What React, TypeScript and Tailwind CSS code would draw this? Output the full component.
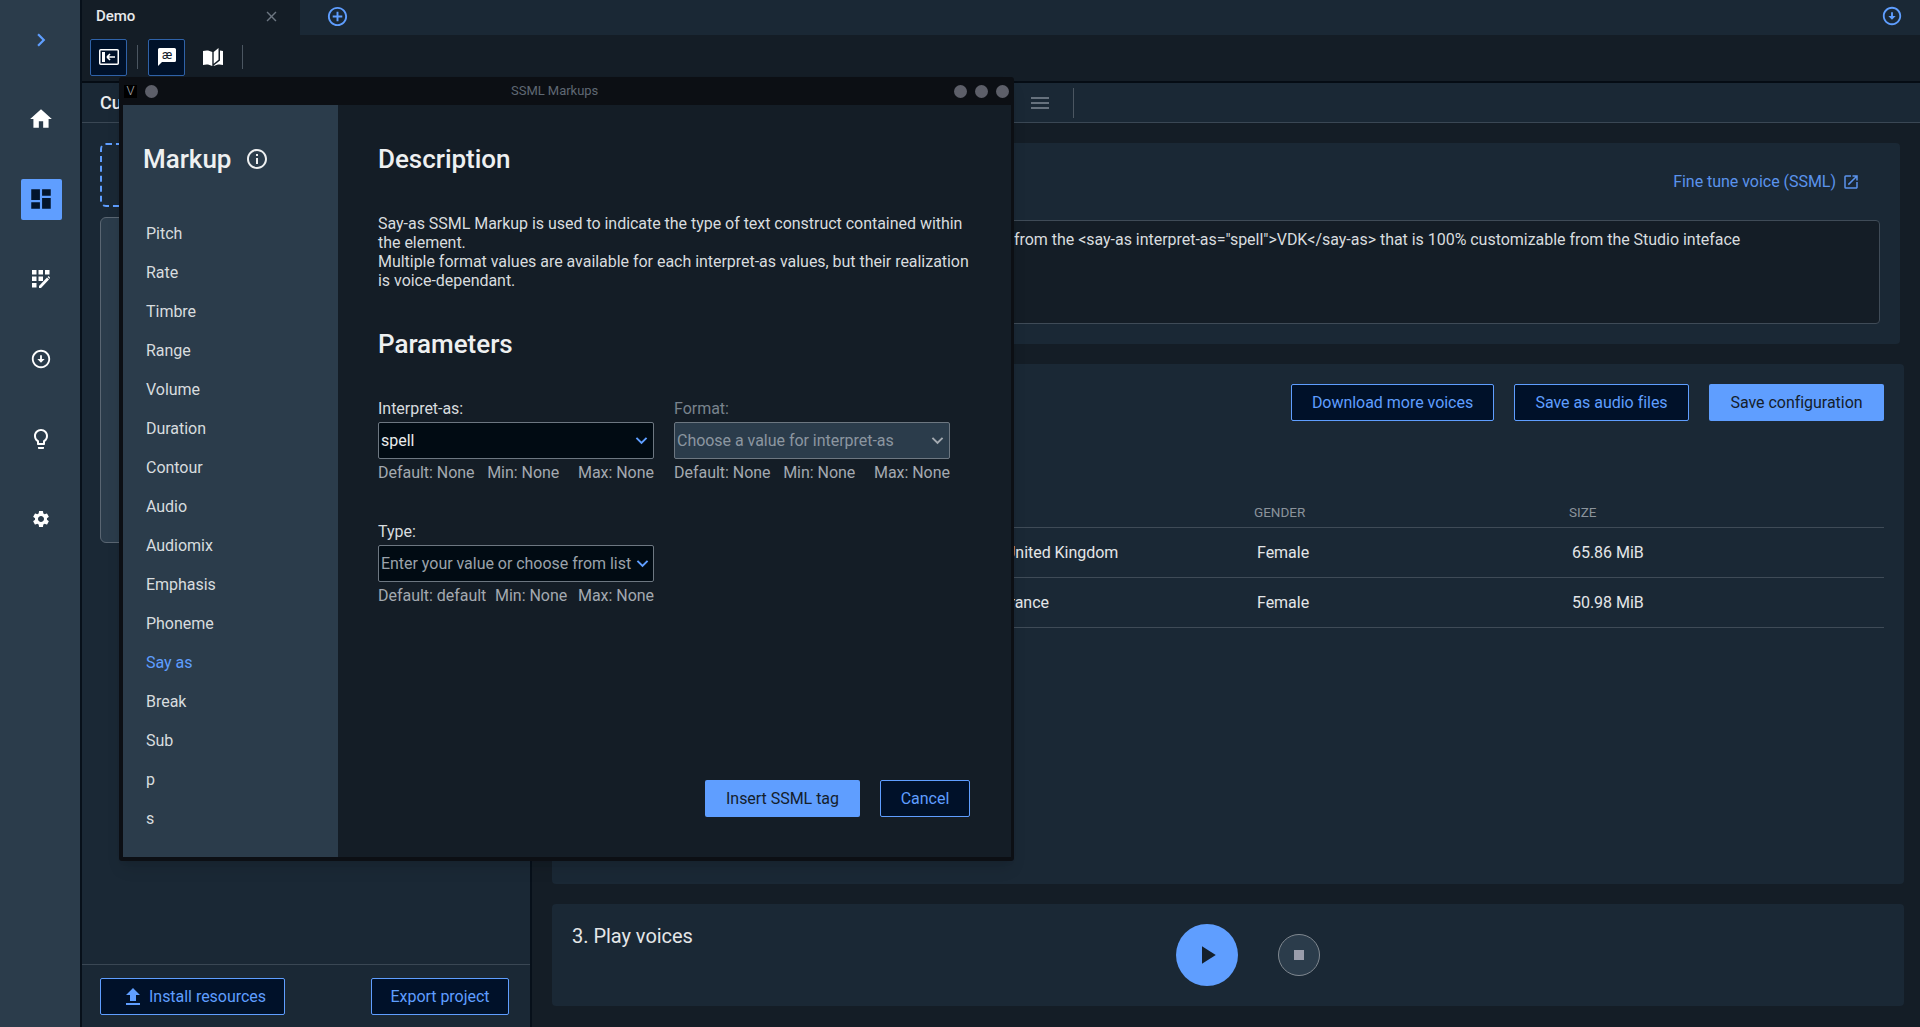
import React from "react";
import {
  MdHome, MdDashboard, MdOutlineArrowCircleDown, MdLightbulbOutline, MdSettings, MdClose,
  MdAddCircleOutline, MdInfoOutline, MdOpenInNew, MdFileUpload, MdMenu, MdPlayArrow,
  MdKeyboardArrowDown, MdChevronRight,
} from "react-icons/md";

const Outline = ({ className = "", children }: { className?: string; children: React.ReactNode }) => (
  <div className={"flex items-center justify-center h-[37px] bg-[#001129] border border-[#5f9eff] rounded-[2px] text-[#5f9eff] text-[16px] " + className}>
    {children}
  </div>
);

const Solid = ({ className = "", children }: { className?: string; children: React.ReactNode }) => (
  <div className={"flex items-center justify-center h-[37px] bg-[#5f9eff] rounded-[2px] text-[#14202c] text-[16px] " + className}>
    {children}
  </div>
);

const EditGrid = () => (
  <svg width="18" height="18" viewBox="0 0 18 18" fill="#fff">
    <rect x="0" y="0" width="4.5" height="4.5" />
    <rect x="6.5" y="0" width="4.5" height="4.5" />
    <rect x="13" y="0" width="4.5" height="4.5" />
    <rect x="0" y="6.5" width="4.5" height="4.5" />
    <rect x="6.5" y="6.5" width="4.5" height="4.5" />
    <rect x="0" y="13" width="4.5" height="4.5" />
    <path d="M7 16 L15 7.6 L17 9.6 L9 18 L7 18 Z M15.6 7 L16.6 6 L18 7.4 L17.6 9 Z" />
  </svg>
);

const PanelArrow = () => (
  <svg width="20" height="16" viewBox="0 0 20 16" fill="none">
    <rect x="0.75" y="0.75" width="18.5" height="14.5" rx="1" stroke="#fff" strokeWidth="1.5" />
    <rect x="3" y="3" width="3" height="10" fill="#fff" />
    <path d="M8 8 H16 M8 8 L11 5 M8 8 L11 11" stroke="#fff" strokeWidth="1.6" />
  </svg>
);

const Bubble = () => (
  <svg width="18" height="18" viewBox="0 0 18 18">
    <path d="M1.5 0 H16.5 A1.5 1.5 0 0 1 18 1.5 V12.5 A1.5 1.5 0 0 1 16.5 14 H4 L0 18 V1.5 A1.5 1.5 0 0 1 1.5 0 Z" fill="#fff" />
    <text x="9" y="10.5" textAnchor="middle" fontSize="12" fontFamily="Roboto, sans-serif" fill="#14202c">æ</text>
  </svg>
);

const Book = () => (
  <svg width="20" height="18" viewBox="0 0 20 18" fill="#fff">
    <path d="M0 3 C3 2 6.5 2.2 9.3 4 V18 C6.5 16.3 3 16 0 17 Z" />
    <path d="M10.7 4 L15.5 0 V11.8 L10.7 15.8 Z" />
    <path d="M17 2.6 C18 2.7 19 2.8 20 3 V17 C17 16 13.5 16.3 10.7 18 V17.4 L17 12.6 Z" />
  </svg>
);

const Chevron = ({ className = "" }: { className?: string }) => (
  <MdKeyboardArrowDown className={"shrink-0 -mr-[2px] " + className} size={23} />
);

const menu = ["Pitch", "Rate", "Timbre", "Range", "Volume", "Duration", "Contour", "Audio", "Audiomix", "Emphasis", "Phoneme", "Say as", "Break", "Sub", "p", "s"];

const Hints = ({ a, minClass }: { a: string; minClass: string }) => (
  <div className="flex justify-between mt-[4px] h-[19px] leading-[19px] text-[16px] text-[#a3a9b0] whitespace-nowrap">
    <span>{a}</span>
    <span className={minClass}>Min: None</span>
    <span>Max: None</span>
  </div>
);

export default function App() {
  return (
    <div className="relative flex w-[1920px] h-[1027px] overflow-hidden bg-[#141d26] font-['Roboto',sans-serif] tracking-[-0.03px] text-[#d8dcdf]">
      {/* Application navigation */}
      <nav className="flex flex-col items-center w-[82px] pl-[2px] shrink-0 bg-[#2b3c4b] border-r-2 border-[#07101a]">
        <div className="flex items-center justify-center h-[79px] text-[#5f9eff]">
          <MdChevronRight size={26} />
        </div>
        <div className="flex items-center justify-center h-[80px] text-white"><MdHome size={26} /></div>
        <div className="flex items-center justify-center h-[80px]">
          <div className="flex items-center justify-center w-[41px] h-[41px] bg-[#5f9eff] rounded-[2px] text-[#03142b]">
            <MdDashboard size={26} />
          </div>
        </div>
        <div className="flex items-center justify-center h-[80px]"><EditGrid /></div>
        <div className="flex items-center justify-center h-[80px] text-white"><MdOutlineArrowCircleDown size={22} /></div>
        <div className="flex items-center justify-center h-[80px] text-white"><MdLightbulbOutline size={24} /></div>
        <div className="flex items-center justify-center h-[80px] text-white"><MdSettings size={20} /></div>
      </nav>

      <div className="flex flex-col flex-1 min-w-0">
        {/* Tab strip */}
        <div className="flex items-center h-[35px] pb-[3px] bg-[#1a2835] shrink-0">
          <div className="flex items-center justify-between w-[218px] h-[35px] -mb-[3px] pb-[3px] pl-[14px] pr-[20px] bg-[#141d26]">
            <span className="text-[15px] font-medium text-[#e8eaec]">Demo</span>
            <MdClose size={17} className="text-[#6c7681]" />
          </div>
          <MdAddCircleOutline size={23} className="ml-[26px] text-[#5f9eff]" />
          <MdOutlineArrowCircleDown size={22} className="ml-auto mr-[17px] text-[#5f9eff]" />
        </div>

        {/* Toolbar */}
        <div className="flex items-center h-[48px] pb-[2px] pl-[8px] bg-[#141d26] border-b-2 border-[#050c14] shrink-0">
          <div className="flex items-center justify-center w-[37px] h-[37px] bg-[#001129] border border-[#2f62a8] rounded-[2px]">
            <PanelArrow />
          </div>
          <div className="w-px h-[24px] ml-[10px] mr-[10px] bg-[#4b5661]" />
          <div className="flex items-center justify-center w-[37px] h-[37px] bg-[#001129] border border-[#2f62a8] rounded-[2px]">
            <Bubble />
          </div>
          <div className="flex items-center justify-center w-[20px] ml-[18px]"><Book /></div>
          <div className="w-px h-[24px] ml-[19px] bg-[#4b5661]" />
        </div>

        <div className="flex flex-1 min-h-0">
          {/* Project panel */}
          <aside className="flex flex-col w-[450px] shrink-0 bg-[#1a2835] border-r-2 border-[#07101a]">
            <div className="flex items-center h-[40px] pl-[18px] border-b border-[#3a4754] text-[18px] font-medium text-[#eceef0] shrink-0">
              Custom voices
            </div>
            <div className="flex flex-col flex-1 pl-[18px] pr-[22px] pt-[20px]">
              <div className="h-[64px] border-2 border-dashed border-[#5f9eff] rounded-[6px]" />
              <div className="h-[326px] mt-[10px] bg-[#2b3c4b] border border-[#5a6672] rounded-[6px]" />
            </div>
            <div className="flex items-start justify-between h-[63px] pt-[13px] pl-[18px] pr-[21px] border-t border-[#3a4754] shrink-0">
              <Outline className="w-[185px] gap-[4px] pl-[2px]">
                <MdFileUpload size={24} />
                <span>Install resources</span>
              </Outline>
              <Outline className="w-[138px]">Export project</Outline>
            </div>
          </aside>

          {/* Workspace */}
          <main className="flex flex-col flex-1 min-w-0 bg-[#141d26]">
            <div className="flex items-center h-[40px] pl-[496px] bg-[#1a2835] border-b border-[#3a4754] shrink-0">
              <MdMenu size={24} className="text-[#66717d]" />
              <div className="w-px h-[30px] ml-[21px] bg-[#4b5661]" />
            </div>
            <div className="flex flex-col gap-[20px] pt-[20px] pl-[20px] pr-[16px]">
              <section className="flex flex-col h-[201px] mr-[4px] bg-[#1a2835] rounded-[4px] pr-[20px] pl-[16px]">
                <div className="flex items-center justify-end gap-[6px] h-[77px] pr-[20px] text-[16px] text-[#5b93ec]">
                  <span>Fine tune voice (SSML)</span>
                  <MdOpenInNew size={18} />
                </div>
                <div className="h-[104px] pl-[445px] pt-[9px] bg-[#141d26] border border-[#3f4b57] rounded-[4px] text-[16px] leading-[19px] text-[#d8dcdf] whitespace-nowrap">
                  {'from the <say-as interpret-as="spell">VDK</say-as> that is 100% customizable from the Studio inteface'}
                </div>
              </section>

              <section className="flex flex-col h-[520px] bg-[#1a2835] rounded-[4px] pt-[20px] pl-[16px] pr-[20px]">
                <div className="flex justify-end gap-[20px]">
                  <Outline className="w-[203px]">Download more voices</Outline>
                  <Outline className="w-[175px]">Save as audio files</Outline>
                  <Solid className="w-[175px]">Save configuration</Solid>
                </div>
                <div className="grid grid-cols-[435px_251px_315px_1fr] items-center h-[27px] mt-[80px] pb-[4px] border-b border-[#3f4b57] text-[13.5px] text-[#8b939b]">
                  <span />
                  <span />
                  <span>GENDER</span>
                  <span>SIZE</span>
                </div>
                {[
                  { loc: "United Kingdom", size: "65.86 MiB", cls: "pl-[2px]" },
                  { loc: "France", size: "50.98 MiB", cls: "-ml-[2px]" },
                ].map(({ loc, size, cls }) => (
                  <div key={loc} className="grid grid-cols-[435px_251px_315px_1fr] items-center h-[50px] border-b border-[#3f4b57] text-[16px] text-[#e4e6e8]">
                    <span />
                    <span className={cls}>{loc}</span>
                    <span className="pl-[3px]">Female</span>
                    <span className="pl-[3px]">{size}</span>
                  </div>
                ))}
              </section>

              <section className="flex items-center h-[102px] bg-[#1a2835] rounded-[4px] pl-[20px]">
                <div className="self-start w-[604px] mt-[18px] text-[20px] leading-[28px] text-[#e4e6e8]">3. Play voices</div>
                <div className="flex items-center justify-center w-[62px] h-[62px] rounded-full bg-[#5f9eff] text-[#14202c]">
                  <MdPlayArrow size={30} />
                </div>
                <div className="flex items-center justify-center w-[42px] h-[42px] ml-[40px] rounded-full bg-[#2b3c4b] border border-[#808890]">
                  <div className="w-[10px] h-[10px] bg-[#9a9dab]" />
                </div>
              </section>
            </div>
          </main>
        </div>
      </div>

      {/* SSML Markups window */}
      <div className="absolute left-[119px] top-[77px] flex flex-col w-[895px] h-[784px] pl-[4px] pr-[3px] pb-[4px] bg-[#0c0f14] rounded-[3px] shadow-lg">
        <div className="flex items-center h-[28px] pl-px pr-[2px] shrink-0">
          <div className="flex items-center justify-center w-[13px] h-[13px] bg-black text-[13px] font-light text-[#a9adb2]">V</div>
          <div className="w-[13px] h-[13px] ml-[8px] rounded-full bg-[#5d5f69]" />
          <div className="ml-[353px] text-[13px] text-[#5f6873]">SSML Markups</div>
          <div className="flex gap-[8px] ml-auto">
            <div className="w-[13px] h-[13px] rounded-full bg-[#5d5f69]" />
            <div className="w-[13px] h-[13px] rounded-full bg-[#5d5f69]" />
            <div className="w-[13px] h-[13px] rounded-full bg-[#5d5f69]" />
          </div>
        </div>
        <div className="flex flex-1 min-h-0">
          <div className="flex flex-col w-[215px] shrink-0 bg-[#2b3c4b]">
            <div className="flex items-center gap-[14px] h-[54px] ml-[20px] mt-[27px]">
              <span className="text-[26px] font-medium text-[#eef0f1]">Markup</span>
              <MdInfoOutline size={24} className="text-[#eef0f1]" />
            </div>
            <div className="flex flex-col mt-[28px] pl-[23px]">
              {menu.map((m) => (
                <div key={m} className={"flex items-center h-[39px] text-[16px] " + (m === "Say as" ? "text-[#5f9eff]" : "text-[#d8dcdf]")}>
                  {m}
                </div>
              ))}
            </div>
          </div>
          <div className="relative flex flex-col flex-1 min-w-0 bg-[#141d26] pl-[40px] pr-[32px]">
            <div className="flex items-center h-[54px] mt-[27px] text-[26px] font-medium text-[#eef0f1]">Description</div>
            <p className="mt-[28px] text-[16px] leading-[19px] text-[#d8dcdf]">
              Say-as SSML Markup is used to indicate the type of text construct contained within the element.<br />
              Multiple format values are available for each interpret-as values, but their realization is voice-dependant.
            </p>
            <div className="flex items-center h-[54px] mt-[27px] text-[26px] font-medium text-[#eef0f1]">Parameters</div>
            <div className="grid grid-cols-[276px_276px] gap-x-[20px] mt-[28px]">
              <div>
                <div className="h-[19px] leading-[19px] text-[16px] text-[#d8dcdf]">Interpret-as:</div>
                <div className="flex items-center justify-between h-[37px] mt-[4px] pl-[2px] pr-[2px] bg-[#010b13] border border-[#6d7781] rounded-[2px] text-[16px] text-[#e8eaec]">
                  <span>spell</span>
                  <Chevron className="text-[#5f9eff]" />
                </div>
                <Hints a="Default: None" minClass="mr-[6px]" />
              </div>
              <div>
                <div className="h-[19px] leading-[19px] text-[16px] text-[#79838d]">Format:</div>
                <div className="flex items-center justify-between h-[37px] mt-[4px] pl-[2px] pr-[2px] bg-[#2b3c4b] border border-[#6d7781] rounded-[2px] text-[16px] text-[#8c96a0]">
                  <span>Choose a value for interpret-as</span>
                  <Chevron className="text-[#a3a9b0]" />
                </div>
                <Hints a="Default: None" minClass="mr-[6px]" />
              </div>
              <div className="mt-[40px]">
                <div className="h-[19px] leading-[19px] text-[16px] text-[#d8dcdf]">Type:</div>
                <div className="flex items-center justify-between h-[37px] mt-[4px] pl-[2px] pr-[2px] bg-[#010b13] border border-[#6d7781] rounded-[2px] text-[16px] text-[#9aa2aa] whitespace-nowrap">
                  <span>Enter your value or choose from list</span>
                  <Chevron className="text-[#5f9eff]" />
                </div>
                <Hints a="Default: default" minClass="mr-[2px]" />
              </div>
            </div>
            <div className="absolute bottom-[40px] right-[41px] flex gap-[20px]">
              <Solid className="w-[155px]">Insert SSML tag</Solid>
              <Outline className="w-[90px]">Cancel</Outline>
            </div>
          </div>
        </div>
      </div>
    </div>
  );
}
